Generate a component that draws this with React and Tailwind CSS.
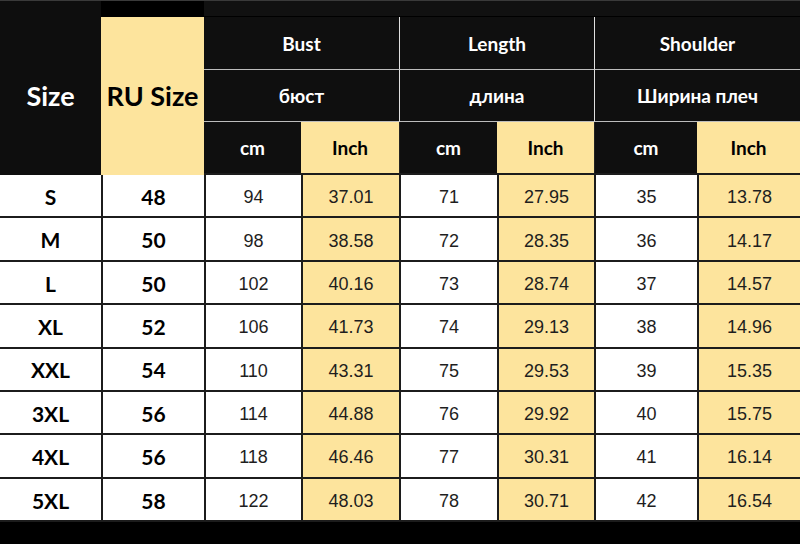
import React from "react";

const rows = [
  ["S", "48", "94", "37.01", "71", "27.95", "35", "13.78"],
  ["M", "50", "98", "38.58", "72", "28.35", "36", "14.17"],
  ["L", "50", "102", "40.16", "73", "28.74", "37", "14.57"],
  ["XL", "52", "106", "41.73", "74", "29.13", "38", "14.96"],
  ["XXL", "54", "110", "43.31", "75", "29.53", "39", "15.35"],
  ["3XL", "56", "114", "44.88", "76", "29.92", "40", "15.75"],
  ["4XL", "56", "118", "46.46", "77", "30.31", "41", "16.14"],
  ["5XL", "58", "122", "48.03", "78", "30.71", "42", "16.54"],
];

const bold = { fontFamily: "Lato, 'Open Sans', 'DejaVu Sans', sans-serif" };
const plain = { fontFamily: "'Liberation Sans', Arial, sans-serif" };

const groups = [
  ["Bust", "бюст"],
  ["Length", "длина"],
  ["Shoulder", "Ширина плеч"],
];

const App = () => {
  return (
    <div
      className="w-[800px] h-[544px] bg-black border-t border-[#3a3a3a] grid grid-cols-[101px_103px_97px_98px_98px_97px_103px_103px] grid-rows-[16px_53px_52px_53px_repeat(8,minmax(0,1fr))_22px]"
      style={bold}
    >
      {/* Size header */}
      <div className="col-start-1 row-start-1 row-span-4 bg-[#0e0e0e] flex items-center justify-center pt-[16px] text-white font-bold text-[27px]">
        Size
      </div>
      <div className="col-start-2 row-start-1 bg-black" />
      <div className="col-start-2 row-start-2 row-span-3 bg-[#fde49d] flex items-center justify-center text-black font-bold text-[27px]">
        RU Size
      </div>
      <div className="col-start-3 col-span-6 row-start-1 bg-[#111] border-b border-black" />

      {groups.map(([en, ru], i) => (
        <React.Fragment key={en}>
          <div
            className={`col-span-2 row-start-2 bg-[#0f0f0f] border-b border-[#bdbdbd] flex items-center justify-center pt-[2px] text-white font-bold text-[19px] ${
              i > 0 ? "border-l border-l-[#e0e0e0]" : ""
            }`}
          >
            {en}
          </div>
          <div
            className={`col-span-2 row-start-3 bg-[#0f0f0f] border-b border-[#bdbdbd] flex items-center justify-center pt-[2px] text-white font-bold text-[19px] ${
              i > 0 ? "border-l border-l-[#e0e0e0]" : ""
            }`}
          >
            {ru}
          </div>
          <div
            className={`row-start-4 bg-[#0f0f0f] border-b-2 border-[#1c1c1c] flex items-center justify-center pt-[2px] text-white font-bold text-[19px] ${
              i > 0 ? "border-l border-l-[#222]" : ""
            }`}
          >
            cm
          </div>
          <div className="row-start-4 bg-[#fde49d] border-b-2 border-[#1c1c1c] flex items-center justify-center pt-[2px] text-black font-bold text-[19px]">
            Inch
          </div>
        </React.Fragment>
      ))}

      {rows.map((r) =>
        r.map((v, j) => {
          const yellow = j === 3 || j === 5 || j === 7;
          const isBold = j < 2;
          return (
            <div
              key={r[0] + j}
              className={`flex items-center justify-center border-b-2 border-[#1c1c1c] ${
                j > 0 ? "border-l-2" : ""
              } ${yellow ? "bg-[#fde49d]" : "bg-white"} ${
                isBold
                  ? "font-bold text-[21px] text-black pt-[2px]"
                  : "text-[18px] text-[#1e1e1e] pt-[4px]"
              }`}
              style={isBold ? bold : plain}
            >
              {v}
            </div>
          );
        })
      )}

      <div className="col-span-8 bg-black" />
    </div>
  );
};

export default App;
